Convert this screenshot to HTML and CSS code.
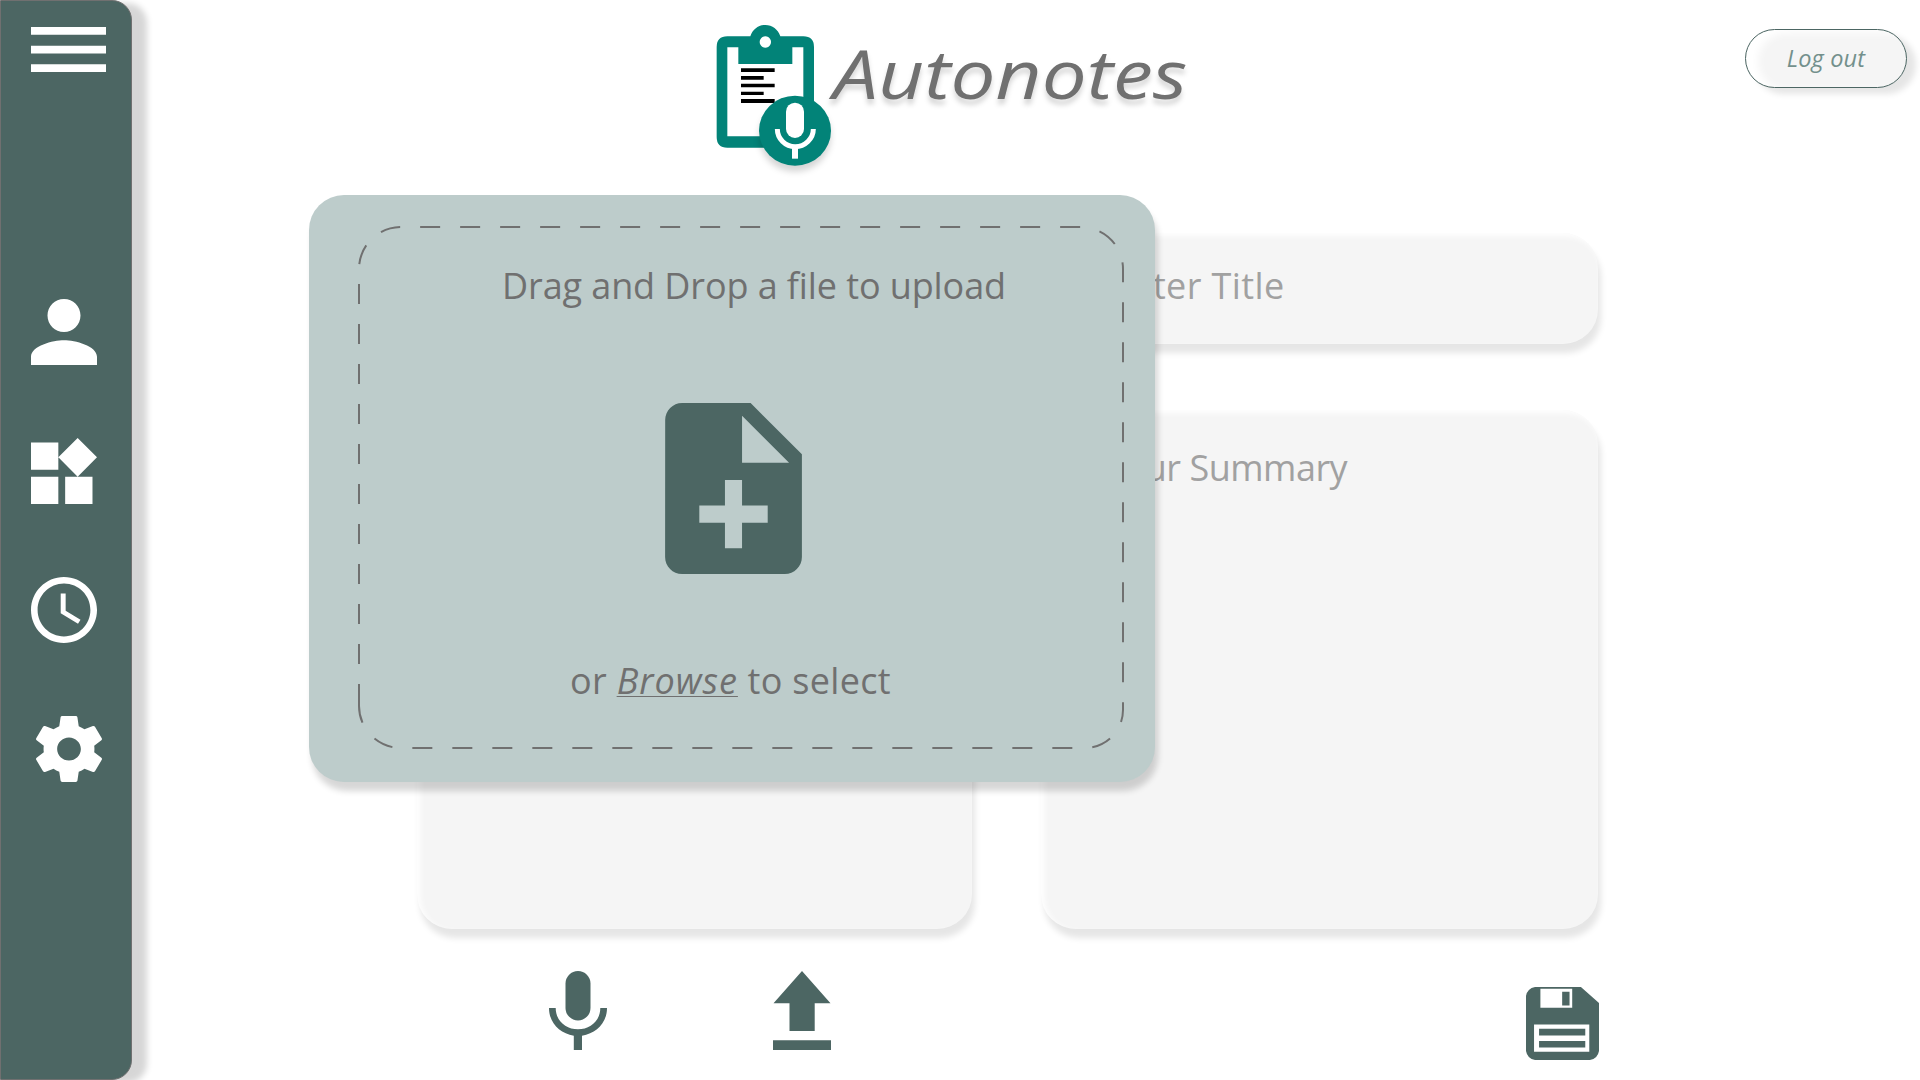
FILE: index.html
```html
<!DOCTYPE html>
<html lang="en">
<head>
<meta charset="utf-8">
<title>Autonotes</title>
<link rel="stylesheet" href="styles.css">
</head>
<body>
<div class="app">
  <nav class="sidebar">
    <svg class="menu" viewBox="0 0 75 45"><path d="M0 0h75v7.700H0zM0 18.700h75v7.700H0zM0 37.200h75v7.700H0z"/></svg>
    <div class="nav-items">
      <svg viewBox="4 4 16 16"><path d="M12 12c2.210 0 4-1.790 4-4s-1.790-4-4-4-4 1.790-4 4 1.790 4 4 4zm0 2c-2.670 0-8 1.340-8 4v2h16v-2c0-2.660-5.330-4-8-4z"/></svg>
      <svg viewBox="3 1.690 19.320 19.310"><path d="M13 13v8h8v-8h-8zM3 21h8v-8H3v8zM3 3v8h8V3H3zm13.660-1.310L11 7.340 16.660 13l5.660-5.660-5.660-5.650z"/></svg>
      <svg viewBox="2 2 20 20"><path d="M11.990 2C6.470 2 2 6.480 2 12s4.470 10 9.990 10C17.520 22 22 17.520 22 12S17.520 2 11.990 2zM12 20c-4.420 0-8-3.580-8-8s3.580-8 8-8 8 3.580 8 8-3.580 8-8 8zm.5-13H11v6l5.250 3.150.75-1.230-4.500-2.670z"/></svg>
      <svg class="gear" viewBox="2.270 2 19.460 20" preserveAspectRatio="none"><path d="M19.430 12.980c.04-.32.07-.64.07-.98s-.03-.66-.07-.98l2.110-1.650c.19-.15.24-.42.12-.64l-2-3.460c-.12-.22-.39-.3-.61-.22l-2.490 1c-.52-.4-1.080-.73-1.690-.98l-.38-2.650C14.460 2.180 14.250 2 14 2h-4c-.25 0-.46.18-.49.42l-.38 2.650c-.61.25-1.170.59-1.690.98l-2.490-1c-.23-.09-.49 0-.61.22l-2 3.460c-.13.22-.07.49.12.64l2.110 1.650c-.04.32-.07.65-.07.98s.03.66.07.98l-2.110 1.650c-.19.15-.24.42-.12.64l2 3.460c.12.22.39.3.61.22l2.490-1c.52.4 1.080.73 1.690.98l.38 2.650c.03.24.24.42.49.42h4c.25 0 .46-.18.49-.42l.38-2.650c.61-.25 1.170-.59 1.690-.98l2.490 1c.23.09.49 0 .61-.22l2-3.460c.12-.22.07-.49-.12-.64l-2.110-1.650zM12 15.500c-1.930 0-3.500-1.570-3.500-3.500s1.570-3.500 3.500-3.500 3.500 1.570 3.500 3.500-1.570 3.500-3.500 3.500z"/></svg>
    </div>
  </nav>

  <main class="main">
    <header class="header">
      <svg class="logo" viewBox="0 0 1560 570">
        <path fill="#028378" fill-rule="evenodd" d="M112 109H181C188 88 205 75 226 75S264 88 271 109H340Q372 109 372 141V411Q372 443 340 443H112Q80 443 80 411V141Q80 109 112 109ZM112 142V409H340V142H307V192H145V142ZM226 109a17 17 0 1 0 .1 0Z"/>
        <path d="M153 205H254V216H153ZM153 228H221V239H153ZM153 251H254V262H153ZM153 275H221V285H153ZM153 297H254V309H153Z"/>
        <g class="logo-badge">
          <ellipse cx="315" cy="392" rx="108" ry="105" fill="#028378"/>
          <rect x="288" y="308" width="54" height="106" rx="27" fill="#fff"/>
          <path d="M262 387C262 416 286 440 315.500 440S370 416 370 387" fill="none" stroke="#fff" stroke-width="15"/>
          <path d="M306 440h18v36h-18z" fill="#fff"/>
        </g>
        <text class="logo-text" x="430" y="298" textLength="1062" lengthAdjust="spacingAndGlyphs">Autonotes</text>
      </svg>
      <button class="logout">Log out</button>
    </header>

    <section class="cards">
      <div class="card transcript"></div>
      <div class="card title-field">Enter Title</div>
      <div class="card summary">Your Summary</div>
    </section>

    <footer class="actions">
      <svg class="action mic" viewBox="0 0 58 79"><rect x="16.500" width="25" height="49.500" rx="12.500"/><path d="M0 37h6.700C6.700 50 17 58.300 29 58.300S51.300 50 51.300 37H58C58 52 47 62.500 33 64.700V79h-8.200V64.700C11 62.500 0 52 0 37z"/></svg>
      <svg class="action upload" viewBox="0 0 58 79"><path d="M29 0 57.500 32.300H41.700V60H16.500V32.300H.5zM0 69.300h58V79H0z"/></svg>
      <svg class="action save" viewBox="0 0 218 218"><path fill-rule="evenodd" d="M27 0H164L218 48V191Q214 214 191 218H27Q4 214 0 191V27Q4 4 27 0ZM43 5V62H138V5ZM24 112V193H189V112Z"/><path d="M108 14h22v41h-22zM39 125h138v20H39zM39 161h138v20H39z"/></svg>
    </footer>
  </main>

  <div class="dialog">
    <svg class="dashes" viewBox="309 195 846 587"><path d="M359 704V269a42 42 0 0 1 42-42H1081a42 42 0 0 1 42 42V710a38 38 0 0 1-38 38H401a42 42 0 0 1-42-42V704"/></svg>
    <p class="drop-text">Drag and Drop a file to upload</p>
    <svg class="file" viewBox="4 2 16 20"><path d="M14 2H6c-1.100 0-1.990.9-1.990 2L4 20c0 1.100.89 2 1.990 2H18c1.100 0 2-.9 2-2V8l-6-6zm2 14h-3v3h-2v-3H8v-2h3v-3h2v3h3v2zm-3-7V3.500L18.500 9H13z"/></svg>
    <p class="browse-text">or <a class="browse">Browse</a> to select</p>
  </div>
</div>
</body>
</html>
```
FILE: styles.css
```css
* { box-sizing: border-box; }
body {
  margin: 0;
  background: #fff;
  font-family: "Open Sans", "Noto Sans", sans-serif;
  color: #707070;
}
svg { display: block; overflow: visible; flex: none; }
p { margin: 0; white-space: nowrap; }
.app {
  position: relative;
  display: flex;
  width: 1920px;
  height: 1080px;
  overflow: hidden;
}
.sidebar {
  width: 132px;
  height: 1080px;
  padding: 26px 0 0 30px;
  background: #4c6663;
  border: 1px solid #707070;
  border-radius: 0 20px 20px 0;
  box-shadow: 15px 3px 6px rgba(0, 0, 0, .16);
  fill: #fff;
}
.menu { width: 75px; height: 45px; }
.nav-items {
  display: flex;
  flex-direction: column;
  gap: 73px;
  margin-top: 227px;
}
.nav-items svg { width: 66px; height: 66px; }
.nav-items .gear { margin-left: 5px; }

.main { flex: 1; display: flex; flex-direction: column; }
.header {
  display: flex;
  justify-content: space-between;
  height: 233px;
  padding: 0 13px 0 558px;
}
.logo { width: 520px; height: 190px; }
.logo-badge { filter: drop-shadow(0 18px 9px rgba(0, 0, 0, .16)); }
.logo-text {
  font-family: "Open Sans", sans-serif;
  font-style: italic;
  font-size: 205px;
  fill: #707070;
  filter: drop-shadow(0 16px 8px rgba(0, 0, 0, .16));
}
.logout {
  width: 162px;
  height: 59px;
  margin-top: 29px;
  padding: 0 0 1px;
  border: 1px solid #4c6663;
  border-radius: 30px;
  background: #f5f5f5;
  box-shadow: 9px 6px 6px rgba(0, 0, 0, .1), inset 12px 3px 8px #fff;
  color: #73908c;
  font: italic 23.5px "Open Sans", sans-serif;
  letter-spacing: .15px;
}
.cards {
  display: grid;
  grid-template-columns: 555px 557px;
  grid-template-rows: 111px 519px;
  column-gap: 69px;
  row-gap: 66px;
  padding-left: 285px;
}
.card {
  border-radius: 35px;
  background: #f5f5f5;
  box-shadow: 3px 9px 6px rgba(0, 0, 0, .1), inset 3px 3px 6px #fff;
  color: #a1a1a1;
  font-size: 36px;
  line-height: 50px;
}
.transcript { grid-row: 2; }
.title-field { grid-column: 2; padding: 28px 0 0 69px; letter-spacing: .4px; }
.summary { grid-column: 2; padding: 33px 0 0 63px; letter-spacing: -.5px; }
.actions {
  display: flex;
  align-items: flex-start;
  padding: 42px 0 0 417px;
  fill: #4c6663;
}
.action { width: 58px; height: 79px; }
.upload { margin-left: 166px; }
.save { width: 73px; height: 73px; margin: 16px 0 0 694.5px; }

.dialog {
  position: absolute;
  left: 309px;
  top: 195px;
  width: 846px;
  height: 587px;
  border-radius: 35px;
  background: #bdcccb;
  box-shadow: 3px 9px 6px rgba(0, 0, 0, .16);
  font-size: 36px;
  line-height: 50px;
}
.dashes {
  position: absolute;
  inset: 0;
  width: 846px;
  height: 587px;
  fill: none;
  stroke: #707070;
  stroke-width: 2;
  stroke-dasharray: 20;
}
.drop-text { margin: 66px 0 0 193px; letter-spacing: -.1px; }
.file { width: 137px; height: 171px; margin: 92px 0 0 356px; fill: #4c6663; }
.browse-text { margin: 82px 0 0 261px; letter-spacing: .3px; }
.browse {
  font-style: italic;
  letter-spacing: 1px;
  text-decoration: underline;
  text-decoration-thickness: 1px;
  text-underline-offset: 2px;
  text-decoration-skip-ink: none;
}
```
